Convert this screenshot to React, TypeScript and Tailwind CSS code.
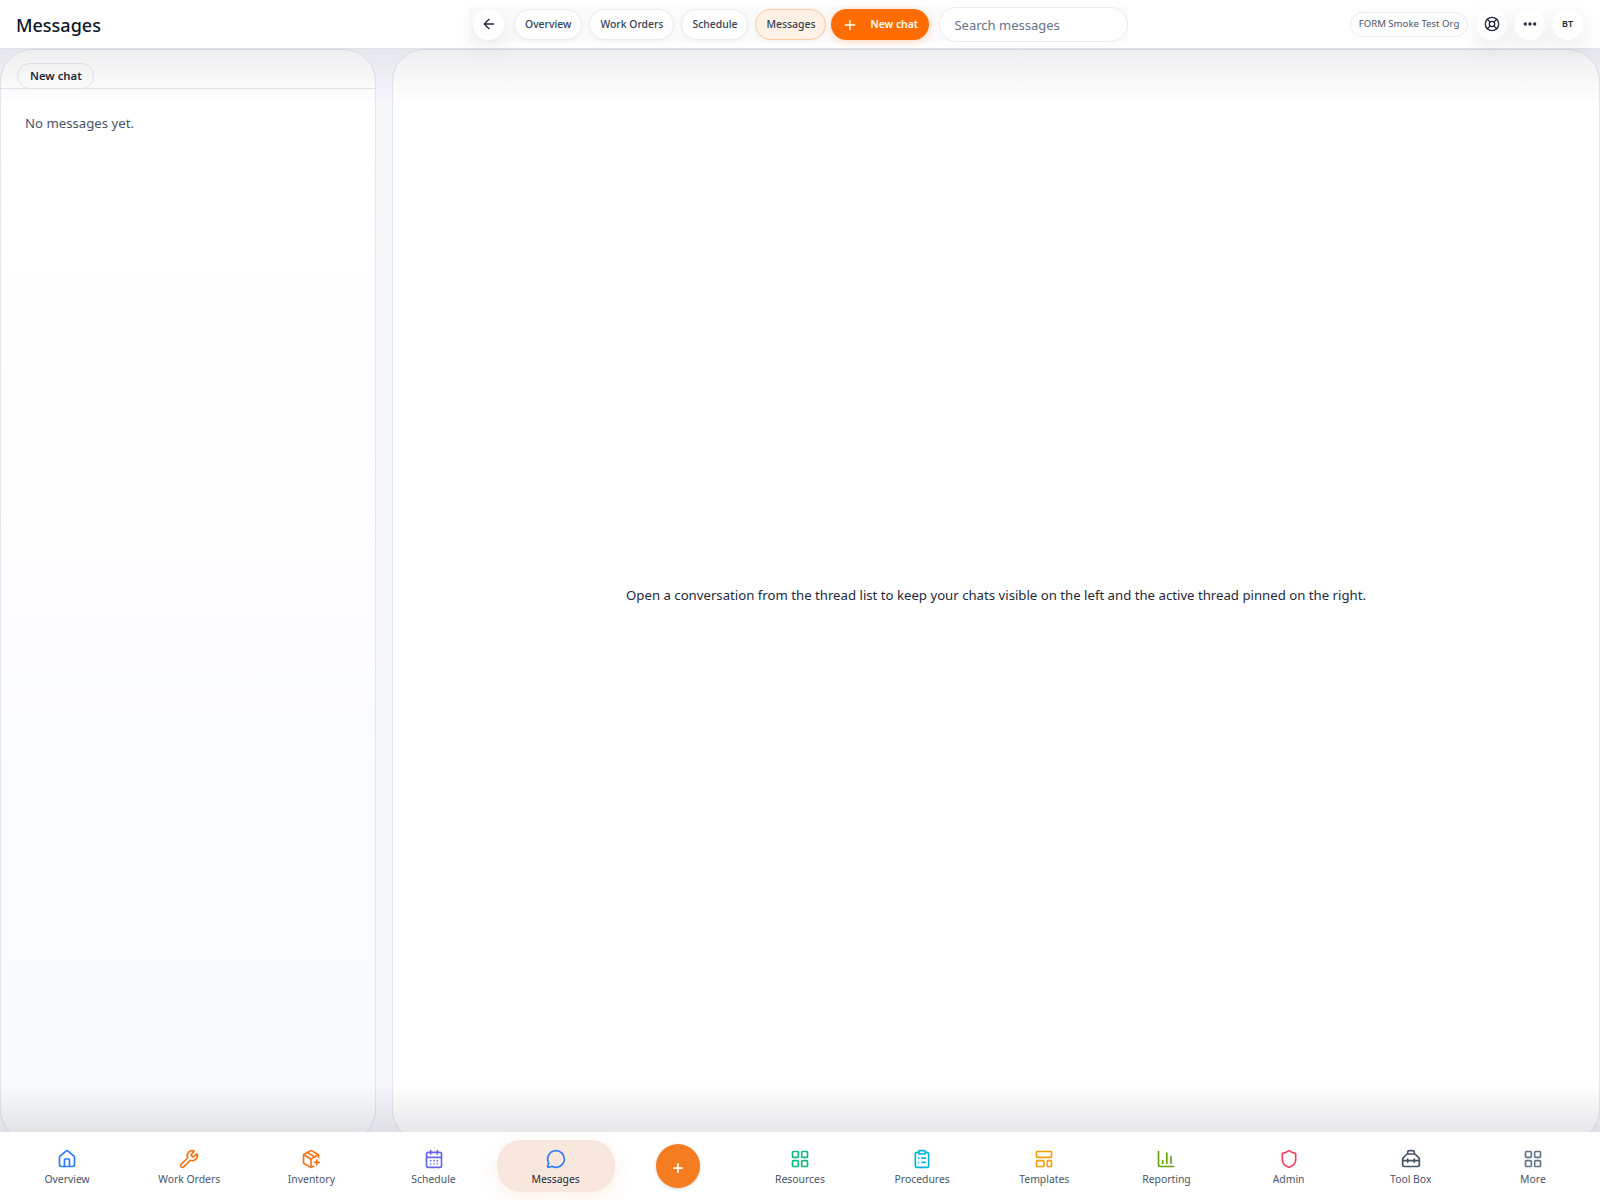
import {
  ArrowLeft,
  ChartColumn,
  CalendarDays,
  ClipboardList,
  Ellipsis,
  House,
  LayoutGrid,
  LayoutTemplate,
  LifeBuoy,
  MessageCircle,
  PackagePlus,
  Plus,
  Shield,
  Toolbox,
  Wrench,
  type LucideIcon,
} from 'lucide-react';

interface DockItem {
  label: string;
  icon: LucideIcon;
  color: string;
  active?: boolean;
}

const leftItems: DockItem[] = [
  { label: 'Overview', icon: House, color: 'text-[#2f7bff]' },
  { label: 'Work Orders', icon: Wrench, color: 'text-[#f97316]' },
  { label: 'Inventory', icon: PackagePlus, color: 'text-[#f97316]' },
  { label: 'Schedule', icon: CalendarDays, color: 'text-[#6366f1]' },
  { label: 'Messages', icon: MessageCircle, color: 'text-[#2f7bff]', active: true },
];

const rightItems: DockItem[] = [
  { label: 'Resources', icon: LayoutGrid, color: 'text-[#10b981]' },
  { label: 'Procedures', icon: ClipboardList, color: 'text-[#06b6d4]' },
  { label: 'Templates', icon: LayoutTemplate, color: 'text-[#f59e0b]' },
  { label: 'Reporting', icon: ChartColumn, color: 'text-[#65a30d]' },
  { label: 'Admin', icon: Shield, color: 'text-[#f43f5e]' },
  { label: 'Tool Box', icon: Toolbox, color: 'text-[#475569]' },
  { label: 'More', icon: LayoutGrid, color: 'text-[#64748b]' },
];

function DockButton({ item }: { item: DockItem }) {
  const Icon = item.icon;
  return (
    <div className="flex justify-center">
      <div
        className={`flex h-[52px] w-[118px] flex-col items-center rounded-[24px] pt-[9px] ${
          item.active ? 'bg-[#f7e7dc] shadow-[0_6px_20px_rgba(249,115,22,0.10)]' : ''
        }`}
      >
        <Icon size={20} strokeWidth={2} className={item.color} />
        <span
          className={`mt-[3px] h-[14px] overflow-hidden text-[10.4px] leading-[15px] ${
            item.active ? 'text-[#1e293b]' : 'text-[#475569]'
          }`}
        >
          {item.label}
        </span>
      </div>
    </div>
  );
}

function Chip({ label, active }: { label: string; active?: boolean }) {
  return (
    <div
      className={`flex h-[31px] items-center rounded-full border px-[10px] pt-[2px] text-[10.4px] font-medium text-[#334155] shadow-[0_1px_4px_rgba(15,23,42,0.05)] ${
        active ? 'border-[#fdc89b] bg-[#fff1e6]' : 'border-[#e8edf4] bg-white'
      }`}
    >
      {label}
    </div>
  );
}

function RoundButton({ children }: { children: React.ReactNode }) {
  return (
    <div className="flex size-[31px] items-center justify-center rounded-full bg-white text-[#1e293b] shadow-[0_8px_24px_rgba(15,23,42,0.09)]">
      {children}
    </div>
  );
}

export default function App() {
  return (
    <div className="flex h-[1200px] w-[1600px] flex-col overflow-hidden bg-[#f5f7fb] font-['Noto_Sans','Open_Sans',sans-serif]">
      {/* Top bar */}
      <header className="relative z-10 flex h-[49px] shrink-0 items-center border-b border-[#dfe4ec] bg-white pl-4 pr-[17px]">
        <h1 className="w-[453px] pt-[2px] text-[18px] font-medium text-[#0f172a]">Messages</h1>
        <div className="flex h-[35px] items-center gap-[7px] bg-[#fbfbfc] pl-1 pr-0">
          <RoundButton>
            <ArrowLeft size={16} strokeWidth={2} />
          </RoundButton>
          <div className="ml-[3px] flex items-center gap-[7px]">
            <Chip label="Overview" />
            <Chip label="Work Orders" />
            <Chip label="Schedule" />
            <Chip label="Messages" active />
          </div>
          <div className="ml-[-2px] flex h-[31px] w-[98px] items-center rounded-full bg-[#ff6d00] pl-[11px] pt-[1px] text-[10.4px] font-semibold text-white shadow-[0_2px_8px_rgba(255,109,0,0.25)]">
            <Plus size={16} strokeWidth={2} />
            <span className="ml-[12px]">New chat</span>
          </div>
          <div className="ml-[3px] flex h-[35px] w-[189px] items-center rounded-full border border-[#e8edf4] bg-white pl-[14px] pt-[3px] text-[13px] text-[#64748b]">
            Search messages
          </div>
        </div>
        <div className="ml-auto flex items-center gap-[7px]">
          <div className="mr-px flex h-[25px] w-[118px] items-center justify-center rounded-full border border-[#e8edf4] bg-white pt-px text-[9.6px] text-[#475569]">
            FORM Smoke Test Org
          </div>
          <RoundButton>
            <LifeBuoy size={16} strokeWidth={2} />
          </RoundButton>
          <RoundButton>
            <Ellipsis size={16} strokeWidth={3} />
          </RoundButton>
          <RoundButton>
            <span className="text-[9px] font-semibold">BT</span>
          </RoundButton>
        </div>
      </header>

      {/* Panels run 10px under the dock, so the bottom corners get cut off */}
      <main className="relative flex min-h-0 flex-1 items-start gap-4 overflow-hidden">
        <section className="flex h-[1093px] w-[376px] shrink-0 flex-col overflow-hidden rounded-[32px] border border-[#e2e6ee] bg-gradient-to-b from-white from-[10%] to-[#f9fafc] to-[90%]">
          <div className="flex h-[39px] shrink-0 items-end border-b border-[#e2e8f0] pl-4">
            <div className="mb-[-1px] flex h-[26px] items-center rounded-full border border-[#e2e6ee] pl-[12px] pr-[11px] pt-px text-[11.3px] font-semibold text-[#1e293b]">
              New chat
            </div>
          </div>
          <p className="px-6 pt-[25px] text-[13.2px] text-[#475569]">No messages yet.</p>
        </section>
        <section className="flex h-[1093px] flex-1 items-center justify-center overflow-hidden rounded-[32px] border border-[#e2e6ee] bg-white">
          <p className="text-[13.2px] text-[#1e293b]">
            Open a conversation from the thread list to keep your chats visible on the left and the active thread pinned on the right.
          </p>
        </section>
        <div className="pointer-events-none absolute inset-x-0 top-0 h-[56px] bg-gradient-to-b from-[rgba(15,23,42,0.07)] to-transparent" />
        <div className="pointer-events-none absolute inset-x-0 bottom-0 h-[48px] bg-gradient-to-t from-[rgba(15,23,42,0.10)] to-transparent" />
      </main>

      {/* Bottom dock */}
      <nav className="relative grid h-[68px] shrink-0 grid-cols-13 items-center bg-white px-[6px]">
        {leftItems.map((item) => (
          <DockButton key={item.label} item={item} />
        ))}
        <div className="flex justify-center">
          <div className="flex size-11 items-center justify-center rounded-full bg-[#f57c20] text-white shadow-[0_1px_3px_rgba(15,23,42,0.2)]">
            <Plus size={14} strokeWidth={3} className="mt-[3px]" />
          </div>
        </div>
        {rightItems.map((item) => (
          <DockButton key={item.label} item={item} />
        ))}
      </nav>
    </div>
  );
}
